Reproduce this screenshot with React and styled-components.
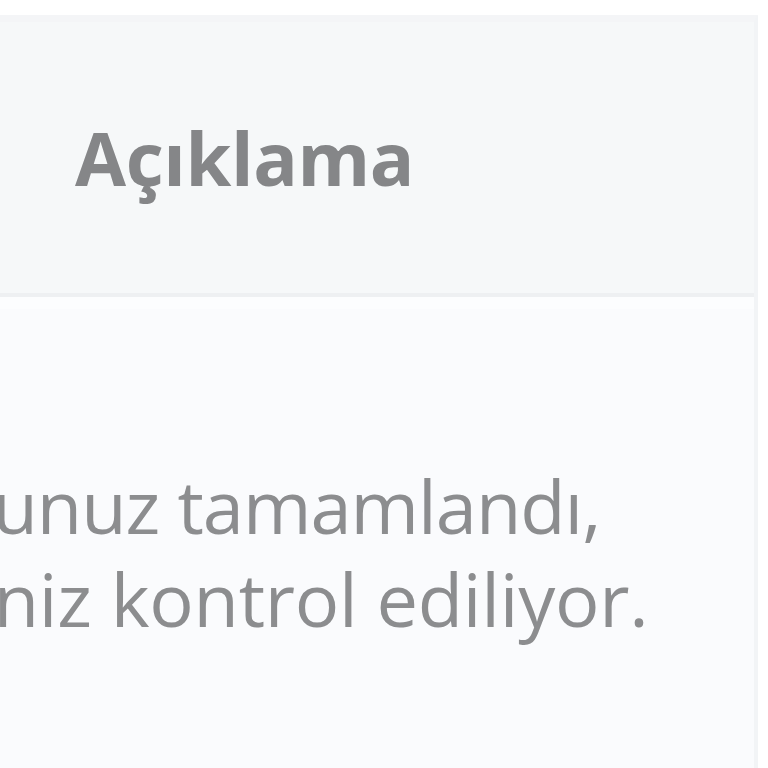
import styled, { createGlobalStyle } from "styled-components"

const GlobalStyle = createGlobalStyle`
    html, body {
        margin: 0;
        padding: 0;
        background: #ffffff;
    }

    body {
        width: 768px;
        height: 768px;
        overflow: hidden;
        font-family: "Open Sans", "Noto Sans", sans-serif;
    }
`

const StyledTable = styled.div`
    display: flex;
    flex-direction: column;

    width: 754px;
    height: 753px;
    margin-top: 15px;
    overflow: hidden;

    background-color: #fafbfd;
    border-top: 7px solid #f4f5f7;
    border-right: 4px solid #f2f4f6;
`

const HeaderRow = styled.div`
    display: flex;
    flex-direction: row;
    align-items: center;

    height: 271px;
    padding-left: 75px;
    flex-shrink: 0;

    background-color: #f6f8f9;
    border-bottom: 4px solid #eef0f2;
`

const HeaderCell = styled.span`
    font-size: 74px;
    font-weight: 700;
    line-height: 1;
    color: #858688;
    letter-spacing: -0.4px;
`

const BodyRow = styled.div`
    display: flex;
    flex-direction: row;

    padding-top: 150px;
    border-top: 12px solid #fcfdfe;
`

const BodyCell = styled.div`
    display: flex;
    flex-direction: column;
    flex-shrink: 0;
    width: 1162px;
    margin-left: -400px;

    font-size: 74px;
    font-weight: 400;
    line-height: 93px;
    color: #8c8d8f;
`

const Line = styled.span`
    display: block;
    text-align: center;
    white-space: nowrap;
    letter-spacing: ${({ $tracking }) => $tracking}px;
    padding-right: ${({ $pad }) => $pad || 0}px;
`

const App = () => {
    return(
        <>
            <GlobalStyle />
            <StyledTable>
                <HeaderRow>
                    <HeaderCell>Açıklama</HeaderCell>
                </HeaderRow>
                <BodyRow>
                    <BodyCell>
                        <Line $tracking={-1}>Başvurunuz tamamlandı,</Line>
                        <Line $tracking={-0.25} $pad={14}>belgeleriniz kontrol ediliyor.</Line>
                    </BodyCell>
                </BodyRow>
            </StyledTable>
        </>
    )
}

export default App
